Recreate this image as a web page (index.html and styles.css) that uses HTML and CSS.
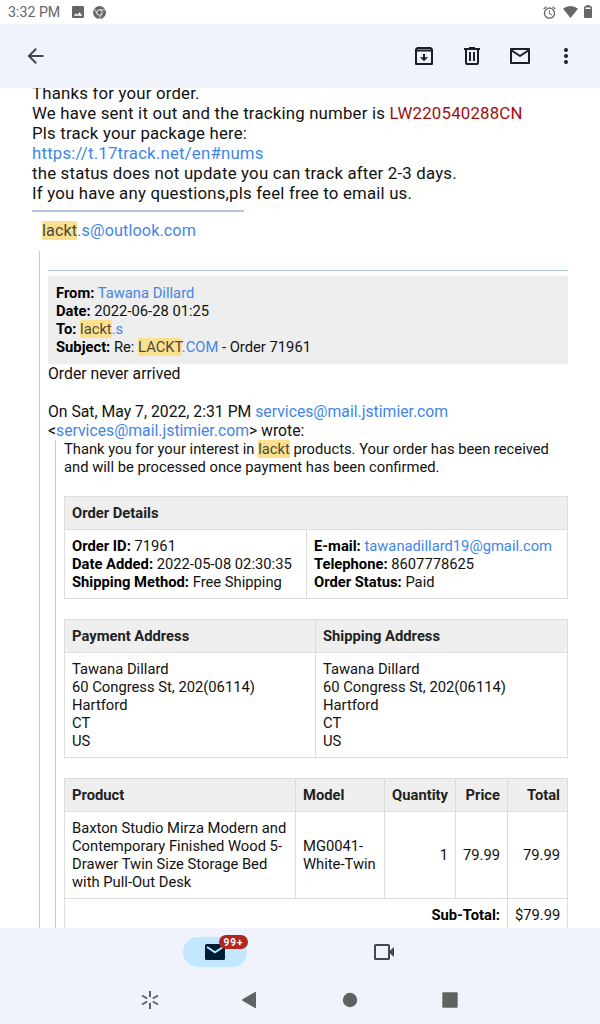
FILE: index.html
```html
<!DOCTYPE html>
<html lang="en">
<head>
    <meta charset="UTF-8">
    <meta name="viewport" content="width=device-width, initial-scale=1.0">
    <title>Mail</title>
    <link rel="stylesheet" href="styles.css">
</head>
<body>

    <div class="status">
        <span class="time">3:32 PM</span>
        <svg class="photo" width="12" height="12" viewBox="0 0 12 12"><path fill-rule="evenodd" d="M1.3 0h9.4Q12 0 12 1.3v9.4q0 1.3-1.3 1.3H1.3Q0 12 0 10.7V1.3Q0 0 1.3 0zM1.8 9.8h8.6L7.6 6.3 5.5 8.8 4 7.3z"/></svg>
        <svg class="chrome" width="13" height="13" viewBox="0 0 24 24">
            <circle cx="12" cy="12" r="12"/>
            <circle cx="12" cy="12" r="5" fill="none" stroke="#fff" stroke-width="1.6"/>
            <path d="M12 7h11M7.7 14.5L2.2 5M16.3 14.5L11 24" fill="none" stroke="#fff" stroke-width="1.4"/>
        </svg>
        <div class="status-right">
            <svg width="15" height="15" viewBox="0 0 24 24"><path d="M22 5.72l-4.6-3.86-1.29 1.53 4.6 3.86L22 5.72zM7.88 3.39L6.6 1.86 2 5.71l1.29 1.53 4.59-3.85zM12.5 8H11v6l4.75 2.85.75-1.23-4-2.37V8zM12 4c-4.97 0-9 4.03-9 9s4.02 9 9 9c4.97 0 9-4.03 9-9s-4.03-9-9-9zm0 16c-3.87 0-7-3.13-7-7s3.13-7 7-7 7 3.13 7 7-3.13 7-7 7z"/></svg>
            <svg class="wifi" width="15" height="12" viewBox="0 0 15 12"><path d="M7.5 12L0 2.8Q3.2 0 7.5 0T15 2.8z"/></svg>
            <svg class="battery" width="8" height="13" viewBox="0 0 8 13"><path fill-rule="evenodd" d="M2.3 0h3.4v1.2H7q1 0 1 1V12q0 1-1 1H1q-1 0-1-1V2.2q0-1 1-1h1.3zM1.5 2.5v1.5h5V2.5z"/></svg>
        </div>
    </div>

    <div class="toolbar">
        <svg class="back" width="24" height="24" viewBox="0 0 24 24"><path d="M19.5 11H7.33l5.590-5.590L11.500 4l-8 8 8 8 1.410-1.410L7.330 13H19.500v-2z"/></svg>
        <div class="actions">
            <svg width="24" height="24" viewBox="0 0 24 24"><path fill="none" stroke="#1b1e25" stroke-width="2" stroke-linejoin="round" d="M4 7V5.5L5.5 4h13L20 5.5V20H4zM4 6.5h16"/><path d="M11 10h2v3.2h3L12 17.2l-4-4h3z"/></svg>
            <svg width="24" height="24" viewBox="0 0 24 24"><path fill="none" stroke="#1b1e25" stroke-width="2" d="M4 5h16M6 5v14q0 1 1 1h10q1 0 1-1V5M10 8v9M14 8v9M9 4h6"/></svg>
            <svg width="24" height="24" viewBox="0 0 24 24"><path fill="none" stroke="#1b1e25" stroke-width="2" stroke-linejoin="round" d="M3 5h18v14H3zM3 6l9 6 9-6"/></svg>
            <svg class="more" width="24" height="24" viewBox="0 0 24 24"><circle cx="12" cy="6" r="2"/><circle cx="12" cy="12" r="2"/><circle cx="12" cy="18" r="2"/></svg>
        </div>
    </div>

    <div class="mail">
        <div class="message">
            Thanks for your order.<br>
            We have sent it out and the tracking number is <span class="tracking">LW220540288CN</span><br>
            Pls track your package here:<br>
            <a>https://t.17track.net/en#nums</a><br>
            the status does not update you can track after 2-3 days.<br>
            If you have any questions,pls feel free to email us.
        </div>
        <div class="sign-line"></div>
        <div class="sign"><a><mark>lackt</mark>.s@outlook.com</a></div>

        <div class="quote">
            <div class="quote-line"></div>
            <div class="info">
                <div><b>From:</b> <a>Tawana Dillard</a></div>
                <div><b>Date:</b> 2022-06-28 01:25</div>
                <div><b>To:</b> <a><mark>lackt</mark>.s</a></div>
                <div><b>Subject:</b> Re: <a><mark>LACKT</mark>.COM</a> - Order 71961</div>
            </div>
            <div class="reply">
                Order never arrived<br>
                <br>
                On Sat, May 7, 2022, 2:31 PM <a>services@mail.jstimier.com</a><br>
                &lt;<a>services@mail.jstimier.com</a>&gt; wrote:
            </div>

            <div class="inner">
                <p>Thank you for your interest in <mark>lackt</mark> products. Your order has been received<br>and will be processed once payment has been confirmed.</p>

                <table class="details">
                    <tr><th colspan="2">Order Details</th></tr>
                    <tr>
                        <td class="c1"><b>Order ID:</b> 71961<br><b>Date Added:</b> 2022-05-08 02:30:35<br><b>Shipping Method:</b> Free Shipping</td>
                        <td><b>E-mail:</b> <a>tawanadillard19@gmail.com</a><br><b>Telephone:</b> 8607778625<br><b>Order Status:</b> Paid</td>
                    </tr>
                </table>

                <table class="address">
                    <tr><th class="c2">Payment Address</th><th>Shipping Address</th></tr>
                    <tr>
                        <td>Tawana Dillard<br>60 Congress St, 202(06114)<br>Hartford<br>CT<br>US</td>
                        <td>Tawana Dillard<br>60 Congress St, 202(06114)<br>Hartford<br>CT<br>US</td>
                    </tr>
                </table>

                <table class="products">
                    <colgroup><col class="w-product"><col class="w-model"><col class="w-qty"><col class="w-price"><col></colgroup>
                    <tr><th>Product</th><th>Model</th><th class="num">Quantity</th><th class="num">Price</th><th class="num">Total</th></tr>
                    <tr>
                        <td>Baxton Studio Mirza Modern and<br>Contemporary Finished Wood 5-<br>Drawer Twin Size Storage Bed<br>with Pull-Out Desk</td>
                        <td>MG0041-<br>White-Twin</td>
                        <td class="num">1</td>
                        <td class="num">79.99</td>
                        <td class="num">79.99</td>
                    </tr>
                    <tr><td class="num" colspan="4"><b>Sub-Total:</b></td><td class="num">$79.99</td></tr>
                </table>
            </div>
        </div>
    </div>

    <div class="tabs">
        <div class="tab active">
            <svg width="20" height="16" viewBox="0 0 20 16"><rect width="20" height="16" rx="1.5" fill="#001d33"/><path d="M2 3l8 5.3L18 3" fill="none" stroke="#c2e7ff" stroke-width="1.8"/></svg>
            <span class="badge">99+</span>
        </div>
        <div class="tab">
            <svg width="20" height="16" viewBox="0 0 20 16"><rect x="1" y="1" width="14" height="14" rx=".6" fill="none" stroke="#44474b" stroke-width="2"/><path d="M15 7.5L20 3v10l-5-4.500z" fill="#44474b"/></svg>
        </div>
    </div>

    <div class="nav">
        <svg width="18" height="18" viewBox="0 0 18 18"><path fill="none" stroke="#5f6163" stroke-width="2" d="M9 0v6M9 12v6M1 4.5l5.2 3M11.8 10.5l5.2 3M17 4.5l-5.2 3M6.2 10.5L1 13.5"/></svg>
        <svg width="18" height="18" viewBox="0 0 18 18"><path d="M1.5 8.2L14 1q1-.5 1 .6v14.8q0 1.1-1 .6L1.5 9.800q-1-.8 0-1.600z"/></svg>
        <svg width="18" height="18" viewBox="0 0 18 18"><circle cx="9" cy="9" r="7.2"/></svg>
        <svg width="18" height="18" viewBox="0 0 18 18"><rect x="1.3" y="1.3" width="15.4" height="15.4" rx="1"/></svg>
    </div>

</body>
</html>
```
FILE: styles.css
```css
* {
    box-sizing: border-box;
}
body {
    margin: 0;
    width: 600px;
    height: 1024px;
    display: flex;
    flex-direction: column;
    overflow: hidden;
    background: #fff;
    color: #111;
    font-family: Roboto, "Liberation Sans", sans-serif;
}
svg {
    display: block;
    flex: none;
}
a {
    color: #4285e8;
}
b {
    color: #000;
}
mark {
    background: #fbe08d;
    color: #4d4a3c;
    border-radius: 1px;
}

/* status bar */
.status {
    height: 24px;
    flex: none;
    display: flex;
    align-items: center;
    padding: 0 8px;
    fill: #666;
}
.time {
    font-size: 14.2px;
    color: #666;
}
.photo {
    margin-left: 12px;
}
.chrome {
    margin-left: 9px;
}
.status-right {
    display: flex;
    align-items: center;
    margin-left: auto;
}
.wifi {
    margin-left: 6px;
}
.battery {
    margin: -2px 0 0 6px;
}

/* toolbar */
.toolbar {
    height: 64px;
    flex: none;
    display: flex;
    align-items: center;
    justify-content: space-between;
    padding: 0 22px 0 24px;
    background: #f0f3fb;
    fill: #1b1e25;
}
.back {
    fill: #44464f;
}
.actions {
    display: flex;
    gap: 24px;
}
.more {
    margin-left: -2px;
}

/* mail body */
.mail {
    height: 840px;
    flex: none;
    overflow: hidden;
    padding: 0 32px;
}
.message {
    margin-top: -5px;
    font-size: 16.8px;
    letter-spacing: .2px;
    line-height: 20px;
    white-space: nowrap;
}
.tracking {
    color: #a30d0d;
}
.sign-line {
    width: 212px;
    height: 2px;
    margin-top: 7px;
    background: #b5c4df;
}
.sign {
    margin: 9px 0 10px 10px;
    font-size: 16.2px;
    letter-spacing: .1px;
    line-height: 20px;
}
.quote {
    margin-left: 7px;
    padding: 19px 0 0 8px;
    border-left: 1px solid #ccc;
}
.quote-line {
    height: 1px;
    background: #b5c4df;
}
.info {
    margin-top: 5px;
    padding: 8px;
    background: #eee;
    font-size: 14.75px;
    line-height: 18px;
}
.reply {
    font-size: 15.75px;
    line-height: 19px;
}
.inner {
    margin-left: 7px;
    padding-left: 8px;
    border-left: 1px solid #ccc;
    font-size: 14.75px;
    line-height: 18px;
}
.inner p {
    margin: 0 0 20px;
    white-space: nowrap;
}
table {
    width: 504px;
    margin-bottom: 20px;
    table-layout: fixed;
    border-collapse: collapse;
}
th, td {
    border: 1px solid #ddd;
    padding: 7px;
    text-align: left;
    white-space: nowrap;
}
th {
    background: #efefef;
    color: #222;
}
.num {
    text-align: right;
}
.c1 {
    width: 242px;
}
.c2 {
    width: 251px;
}
.details {
    table-layout: auto;
}
.w-product {
    width: 231px;
}
.w-model {
    width: 89px;
}
.w-qty {
    width: 71px;
}
.w-price {
    width: 52px;
}

/* bottom bars */
.tabs {
    height: 48px;
    flex: none;
    display: flex;
    padding-left: 183px;
    gap: 105px;
    background: #f0f3fb;
}
.tab {
    position: relative;
    width: 64px;
    height: 30px;
    margin-top: 9px;
    display: flex;
    align-items: center;
    justify-content: center;
}
.active {
    border-radius: 15px;
    background: #c2e7ff;
}
.badge {
    position: absolute;
    left: 36px;
    top: -2px;
    width: 29px;
    height: 14px;
    border-radius: 7px;
    background: #b3261e;
    color: #fff;
    font-size: 10px;
    font-weight: bold;
    line-height: 15px;
    letter-spacing: 1px;
    text-align: center;
}
.nav {
    height: 48px;
    flex: none;
    display: flex;
    align-items: center;
    justify-content: center;
    gap: 82px;
    background: #f0f3fb;
    fill: #5f6163;
}
```
